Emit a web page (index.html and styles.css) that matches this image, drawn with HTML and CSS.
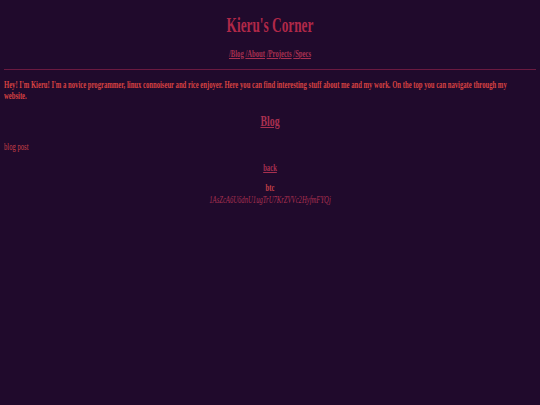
FILE: index.html
```html
<!DOCTYPE html>
<html>
<head>
<meta charset="utf-8">
<title>Kieru's Corner</title>
<link rel="stylesheet" href="styles.css">
</head>
<body>
<header class="site-header">
  <h1 class="site-title narrow">Kieru's Corner</h1>
  <nav class="nav narrow">
    <a href="#">/Blog</a>
    <a href="#">/About</a>
    <a href="#">/Projects</a>
    <a href="#">/Specs</a>
  </nav>
</header>
<hr class="rule">
<div class="clip intro-clip">
  <p class="intro narrow-left">Hey! I'm Kieru! I'm a novice programmer, linux connoiseur and rice enjoyer. Here you can find interesting stuff about me and my work. On the top you can navigate through my website.</p>
</div>
<h2 class="section-title narrow"><a href="#">Blog</a></h2>
<div class="clip">
  <p class="post narrow-left">blog post</p>
</div>
<div class="back narrow"><a href="#">back</a></div>
<div class="btc narrow">
  <div class="btc-label">btc</div>
  <div class="btc-addr">1AsZcA6U6dnU1ugTrU7KrZVVc2HyfmFYQj</div>
</div>
</body>
</html>
```
FILE: styles.css
```css
html, body {
  background: #200a2c;
}
body {
  margin: 0;
  padding: 4px;
  font-family: "Liberation Serif", serif;
  color: #d04044;
}
a {
  color: #a83050;
}
/* condensed serif look */
.narrow {
  transform: scaleX(0.633);
  transform-origin: center top;
}
.clip {
  overflow: hidden;
}
.intro-clip {
  padding-right: 16px;
}
.narrow-left {
  transform: scaleX(0.633);
  transform-origin: left top;
  width: calc(100% / 0.633);
}
.site-header {
  text-align: center;
}
.site-title {
  margin: 9px 0 0;
  font-size: 21px;
  line-height: 24px;
  color: #b02848;
}
.nav {
  margin-top: 11px;
  font-size: 10.5px;
  line-height: 12px;
  font-weight: bold;
}
.rule {
  margin: 9px 0 0;
  border: 0;
  border-top: 1px solid #6a1a40;
}
.intro {
  margin: 9px 0 0;
  font-size: 10.5px;
  line-height: 11px;
  font-weight: bold;
  color: #d84242;
}
.section-title {
  margin: 11px 0 0;
  text-align: center;
  font-size: 15.5px;
  line-height: 18px;
}
.post {
  margin: 11px 0 0;
  font-size: 10.5px;
  line-height: 12px;
  color: #c84048;
}
.back {
  margin-top: 9px;
  text-align: center;
  font-size: 10.5px;
  line-height: 12px;
  font-weight: bold;
}
.btc {
  margin-top: 8px;
  text-align: center;
  font-size: 10.5px;
  line-height: 11px;
}
.btc-label {
  font-weight: bold;
  line-height: 12px;
  color: #c84048;
}
.btc-addr {
  font-style: italic;
  color: #a83050;
}
```
